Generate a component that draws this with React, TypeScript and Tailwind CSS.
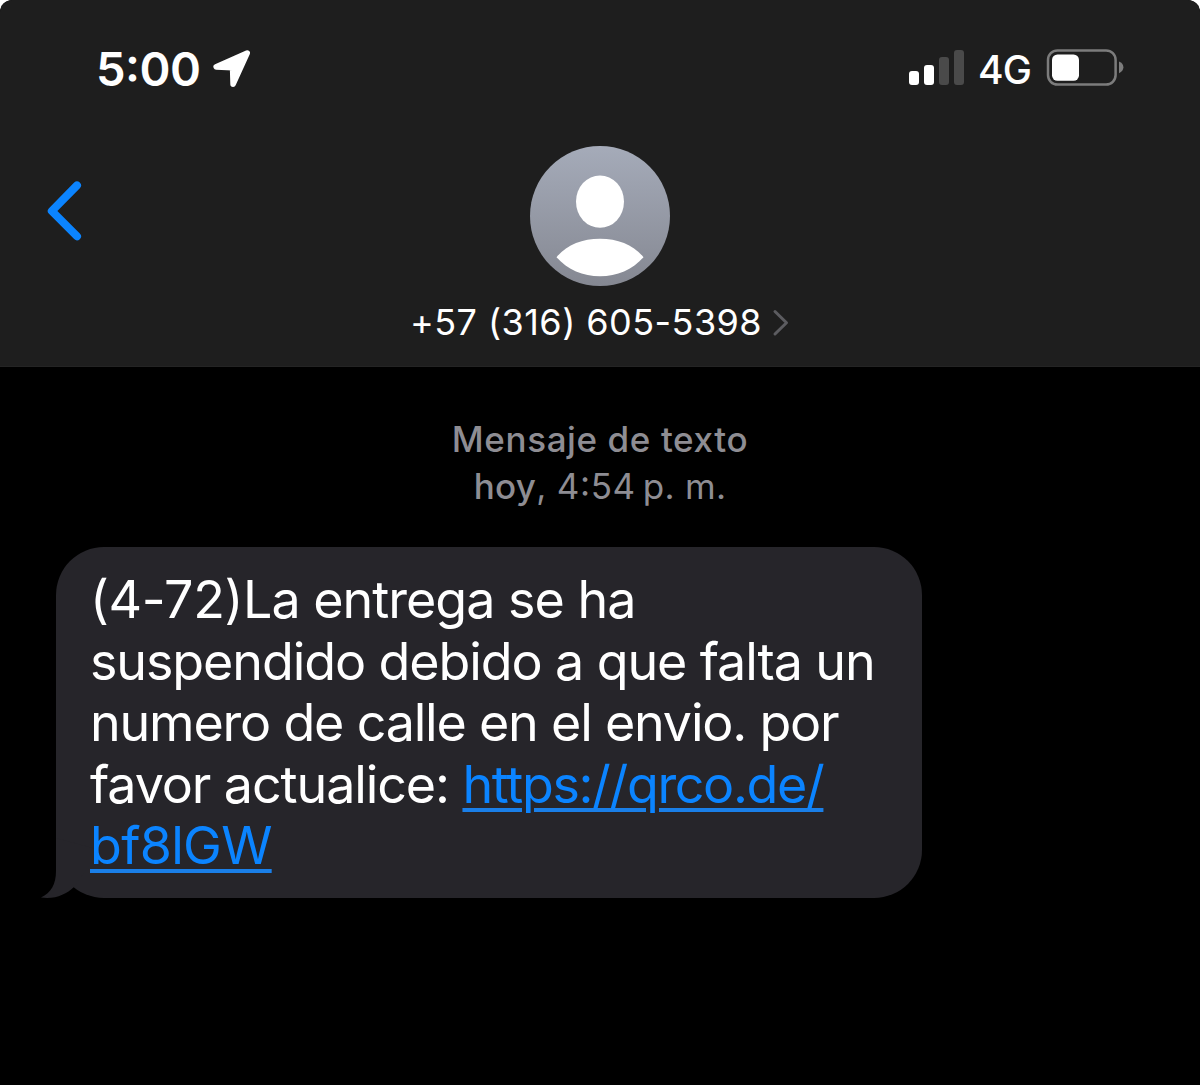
import type { ReactNode } from "react";

function SignalBars(){
    return (
        <div className="flex items-end gap-[5px] h-[36px]">
            <div className="w-[10px] h-[14px] rounded-[3px] bg-white" />
            <div className="w-[10px] h-[20px] rounded-[3px] bg-white" />
            <div className="w-[10px] h-[28px] rounded-[3px] bg-[#4a4a4a]" />
            <div className="w-[10px] h-[35px] rounded-[3px] bg-[#4a4a4a]" />
        </div>
    )
}

function Battery(){
    return (
        <svg width="78" height="38" viewBox="0 0 78 38" fill="none">
            <rect x="2" y="2.4" width="67.6" height="34.2" rx="9.5" stroke="#7c7c7c" strokeWidth="2.5" />
            <rect x="6" y="6.4" width="27" height="26.4" rx="5.5" fill="#fff" />
            <path d="M73 13.5C75.8 14.6 77.4 16.8 77.4 19.3C77.4 21.8 75.8 24 73 25.2Z" fill="#7c7c7c" />
        </svg>
    )
}

function StatusBar(){
    return (
        <div className="flex items-start justify-between h-[146px] pl-[96px] pr-[76px]">
            <div className="flex">
                <span className="w-[116px] pt-[41px] text-[47px] leading-[56px] font-[560] tracking-[-0.5px] whitespace-nowrap [font-feature-settings:'case']">5:00</span>
                <svg className="mt-[48px]" width="40" height="42" viewBox="0 0 40 42">
                    <path d="M35.2 5L4.200 18.900L20.600 19.700L21.100 36.200Z" fill="#fff" stroke="#fff" strokeWidth="5.6" strokeLinejoin="round" />
                </svg>
            </div>

            <div className="flex">
                <div className="pt-[49px]"><SignalBars/></div>
                <span className="w-[82px] pl-[14px] pt-[46px] text-[39px] leading-[48px] font-medium tracking-[-0.8px] whitespace-nowrap">4G</span>
                <div className="pt-[48px]"><Battery/></div>
            </div>
        </div>
    )
}

function Avatar(){
    return (
        <svg width="140" height="140" viewBox="0 0 140 140">
            <defs>
                <linearGradient id="avatar" x1="0" y1="0" x2="0" y2="1">
                    <stop offset="0" stopColor="#a5abb9" />
                    <stop offset="1" stopColor="#858892" />
                </linearGradient>
            </defs>
            <circle cx="70" cy="70" r="70" fill="url(#avatar)" />
            <ellipse cx="70" cy="55.6" rx="24" ry="26.2" fill="#fff" />
            <path d="M26.5 111.2C36.5 99 52 92.7 70 92.7C88 92.7 103.5 99 113.5 111.2C102.5 123.5 87 130.3 70 130.3C53 130.3 37.5 123.5 26.5 111.2Z" fill="#fff" />
        </svg>
    )
}

function Header(){
    return (
        <header className="h-[367px] bg-[#1e1e1e] border-b border-[#242424] rounded-t-[12px]">
            <StatusBar/>

            <div className="grid grid-cols-[530px_140px_1fr]">
                <svg className="mt-[33px] ml-[43px]" width="40" height="64" viewBox="0 0 40 64" fill="none">
                    <path d="M34 6.4L8.8 32L34 57.3" stroke="#0b84ff" strokeWidth="8" strokeLinecap="round" strokeLinejoin="round" />
                </svg>
                <Avatar/>
            </div>

            <div className="flex pl-[410px] pt-[14px]">
                <span className="w-[362px] text-[36px] leading-[44px] tracking-[0.45px] whitespace-nowrap">+57 (316) 605-5398</span>
                <svg className="mt-[8px]" width="18" height="30" viewBox="0 0 18 30" fill="none">
                    <path d="M3 3.5L14.5 14.8L3 26" stroke="#5c5c60" strokeWidth="3" strokeLinecap="round" strokeLinejoin="round" />
                </svg>
            </div>
        </header>
    )
}

function Link({ children }: { children: ReactNode }){
    return (
        <a href="#" className="text-[#0b84ff] underline decoration-[#1a7fe8] decoration-[4px] underline-offset-[5px]">{children}</a>
    )
}

function MessageBubble(){
    return (
        <div className="relative ml-[56px] mt-[37px] w-[866px] h-[351px] rounded-[48px] bg-[#26252a] pl-[34px] pt-[22px]">
            <svg className="absolute left-[-16px] bottom-0" width="62" height="60" viewBox="0 0 62 60">
                <path d="M16 0V33C16 46 11 55 1 59.5C15 61.5 26 56.5 34 49L60 12Z" fill="#26252a" />
            </svg>

            <div className="relative text-[52px] leading-[61.6px] whitespace-nowrap">
                <p className="tracking-[-1px]"><span className="tracking-[-0.4px]">(4-72)</span>La entrega se ha</p>
                <p className="tracking-[-1.1px]">suspendido debido a que falta un</p>
                <p className="tracking-[-1.2px]">numero de calle en el envio. por</p>
                <p className="tracking-[-1.35px]"><span className="tracking-[-1.1px]">favor actualice: </span><Link>https://qrco.de/</Link></p>
                <p className="tracking-[-0.7px]"><Link>bf8lGW</Link></p>
            </div>
        </div>
    )
}

export default function App(){
    return (
        <div className="bg-white">
            <main className="w-[1200px] h-[1085px] overflow-hidden rounded-t-[12px] bg-black text-white font-['Inter',sans-serif]">
                <Header/>

                <div className="flex flex-col items-center pt-[49px] text-[35px] leading-[47px] text-[#8e8d93] whitespace-nowrap">
                    <p className="font-medium tracking-[0.6px]">Mensaje de texto</p>
                    <p className="tracking-[0.3px]">
                        <span className="font-medium">hoy</span>, <span className="tracking-[0.6px] [font-feature-settings:'case']">4:54</span>
                        <span className="ml-[7px]">p. m.</span>
                    </p>
                </div>

                <MessageBubble/>
            </main>
        </div>
    )
}
